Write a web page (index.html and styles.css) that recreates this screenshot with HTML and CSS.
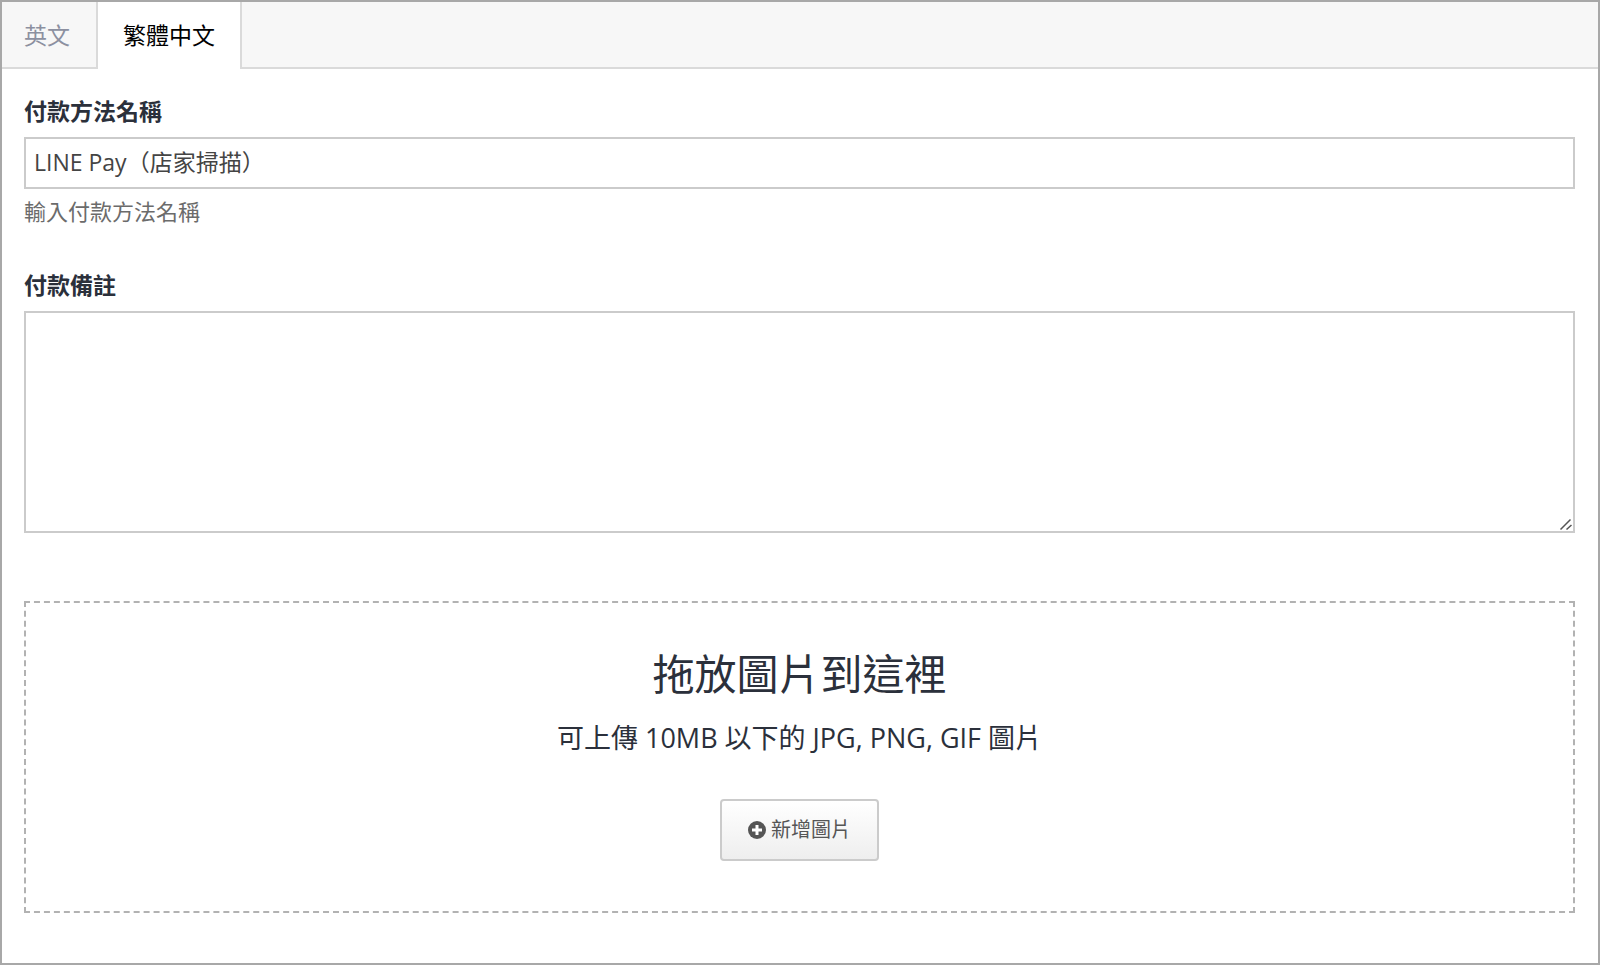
FILE: index.html
```html
<!DOCTYPE html>
<html lang="zh-Hant">
<head>
  <meta charset="UTF-8">
  <meta name="viewport" content="width=device-width, initial-scale=1.0">
  <title>付款方法</title>
  <link rel="stylesheet" href="styles.css">
</head>
<body>

  <div class="panel">
    <nav class="tabs">
      <a class="tab" href="#en">英文</a>
      <a class="tab active" href="#zh-hant">繁體中文</a>
    </nav>

    <form class="panel-body">
      <div class="field">
        <label for="name">付款方法名稱</label>
        <input type="text" id="name" name="name" value="LINE Pay（店家掃描）" aria-describedby="name-help">
        <p class="help" id="name-help">輸入付款方法名稱</p>
      </div>

      <div class="field">
        <label for="remark">付款備註</label>
        <div class="textarea-wrap">
          <textarea id="remark" name="remark"></textarea>
          <svg class="grip" viewBox="0 0 14 14" aria-hidden="true">
            <path d="M1.5 12.5 L11.5 2.5 M7.5 12.5 L12.5 8"/>
          </svg>
        </div>
      </div>

      <div class="dropzone">
        <h2>拖放圖片到這裡</h2>
        <p>可上傳 10MB 以下的 JPG, PNG, GIF 圖片</p>
        <button type="button" class="btn">
          <svg class="icon" viewBox="0 0 18 18" aria-hidden="true">
            <circle cx="9" cy="9" r="9"/>
            <path d="M9 4v10M4 9h10"/>
          </svg>
          新增圖片
        </button>
      </div>
    </form>
  </div>

</body>
</html>
```
FILE: styles.css
```css
:root {
  --text-color: #2b303b;
  --muted-color: #6b6b6b;
  --border-color: #cbcbcb;
  --tab-border: #dadada;
}
* {
  box-sizing: border-box;
}
body {
  margin: 0;
  font-family: "Open Sans", "Noto Sans CJK TC", sans-serif;
  font-size: 23px;
  line-height: 32px;
  color: var(--text-color);
  background-color: #fff;
}
.panel {
  display: flex;
  flex-direction: column;
  min-height: 100vh;
  border: 2px solid #a8a8a8;
}

/* Tabs */
.tabs {
  display: flex;
  background: linear-gradient(var(--tab-border), var(--tab-border)) bottom / 100% 2px no-repeat #f7f7f7;
}
.tab {
  padding: 17px 26px 18px 22px;
  color: #8c90a0;
  text-decoration: none;
}
.tab.active {
  padding: 17px 25px 18px;
  color: #000;
  background-color: #fff;
  border: solid var(--tab-border);
  border-width: 0 2px;
}

/* Form */
.panel-body {
  padding: 26px 23px 24px 22px;
}
.field {
  margin-bottom: 40px;
}
label {
  display: block;
  margin-bottom: 10px;
  font-weight: bold;
}
input[type="text"],
textarea {
  display: block;
  width: 100%;
  padding: 6px 8px 10px;
  border: 2px solid var(--border-color);
  border-radius: 0;
  font: inherit;
  color: #444;
  background-color: #fff;
}
input[type="text"] {
  height: 52px;
}
textarea {
  height: 222px;
  resize: vertical;
}
textarea::-webkit-resizer {
  background: transparent;
}
.textarea-wrap {
  position: relative;
}
.grip {
  position: absolute;
  right: 2px;
  bottom: 2px;
  width: 14px;
  height: 14px;
  fill: none;
  stroke: #555;
  stroke-width: 1.5;
  pointer-events: none;
}
.help {
  margin: 6px 0 42px;
  font-size: 22px;
  color: var(--muted-color);
}

/* Image upload */
.dropzone {
  margin-top: 68px;
  padding: 43px 20px 50px;
  border: 2px dashed #b2b2b2;
  text-align: center;
}
.dropzone h2 {
  margin: 0;
  font-size: 42px;
  font-weight: normal;
  line-height: 56px;
}
.dropzone p {
  margin: 16px 0 41px;
  font-size: 27px;
  line-height: 40px;
}
.btn {
  display: inline-flex;
  align-items: center;
  gap: 5px;
  height: 62px;
  padding: 0 26px;
  border: 2px solid var(--border-color);
  border-radius: 4px;
  background: linear-gradient(#fff, #eee);
  font: inherit;
  font-size: 20px;
  color: #555;
  cursor: pointer;
}
.icon {
  width: 18px;
  height: 18px;
  fill: #555;
}
.icon path {
  stroke: #fff;
  stroke-width: 3;
}
```
